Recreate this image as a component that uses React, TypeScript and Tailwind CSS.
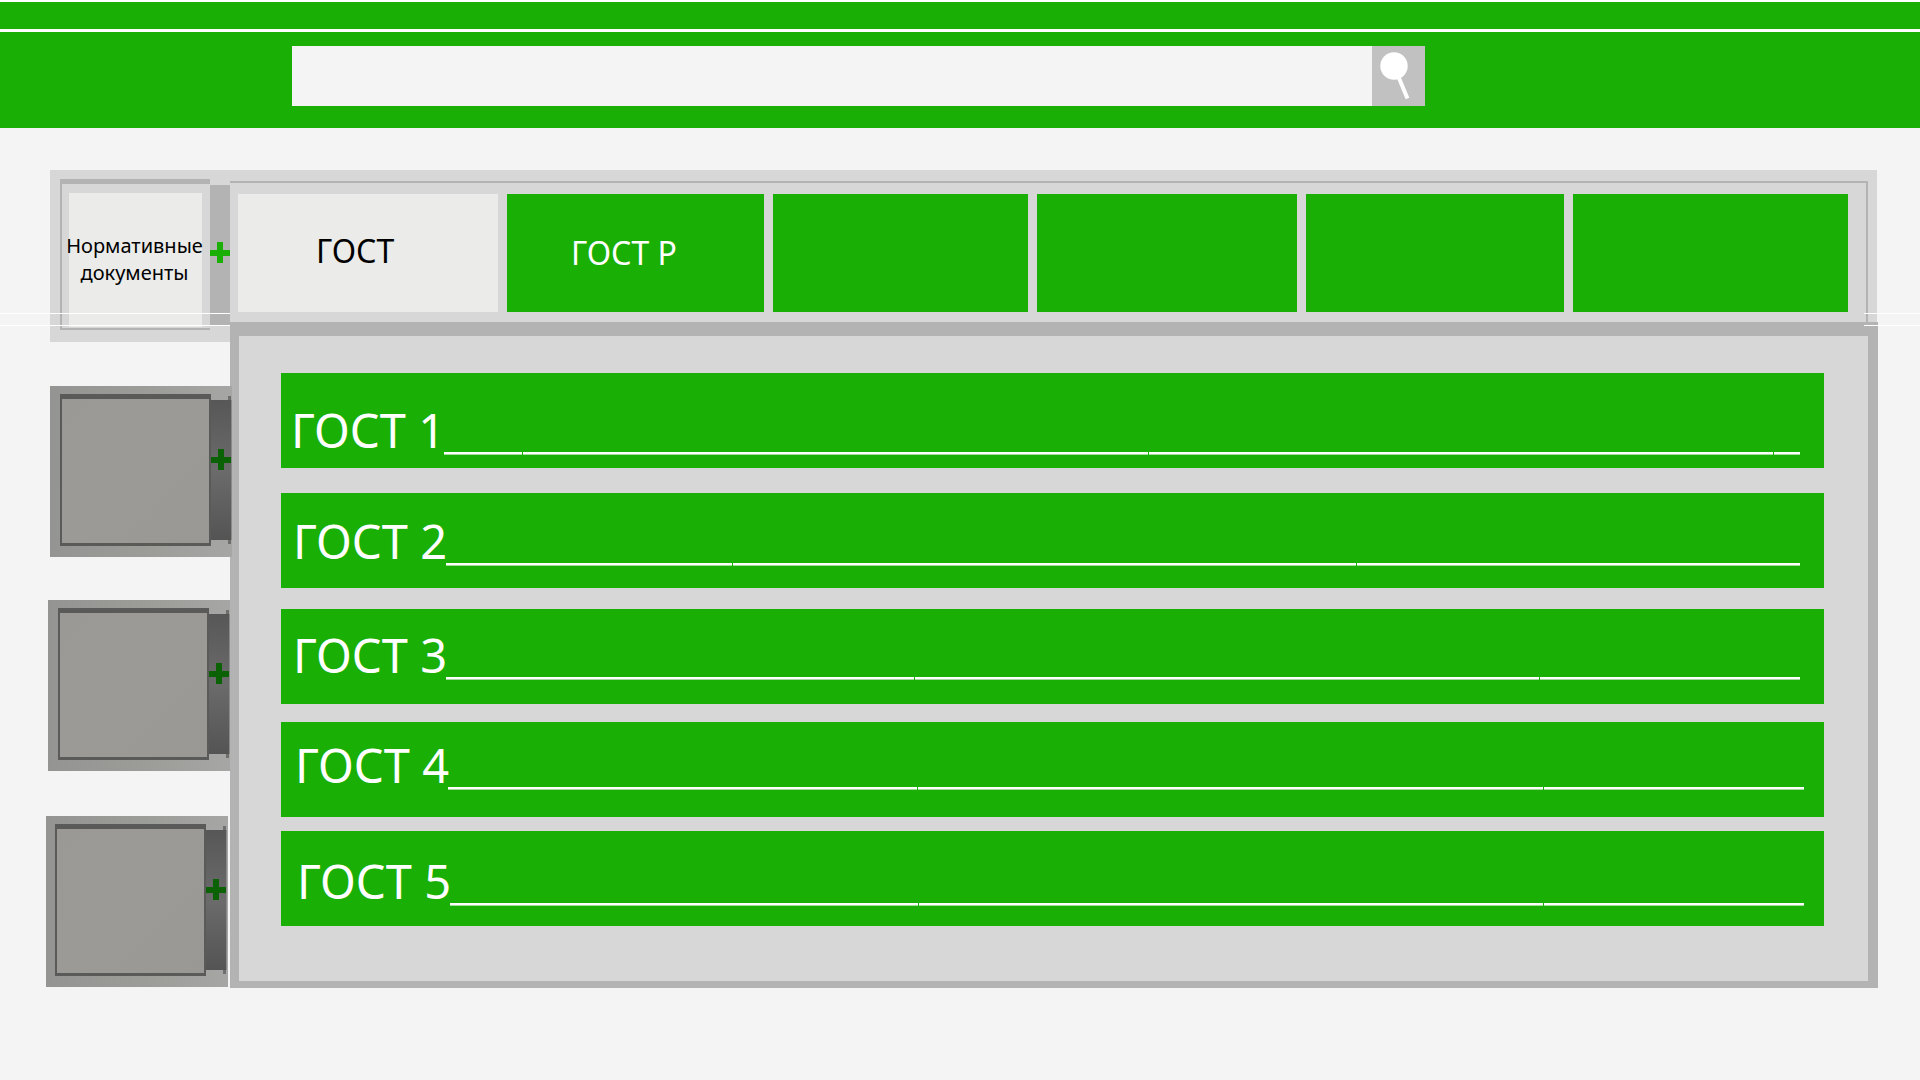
type Row = { label: string; box: string; segments: number[] };

const tabs = ['ГОСТ', 'ГОСТ Р', '', '', '', ''];

const rows: Row[] = [
  { label: 'ГОСТ 1', box: 'pt-[35px] pl-2.5 pr-6', segments: [78, 624, 624, 26] },
  { label: 'ГОСТ 2', box: 'mt-[25px] pt-[26px] pl-3 pr-6', segments: [286, 624, 443] },
  { label: 'ГОСТ 3', box: 'mt-[21px] pt-6 pl-3 pr-6', segments: [468, 624, 260] },
  { label: 'ГОСТ 4', box: 'mt-[18px] pt-[21px] pl-3.5 pr-5', segments: [468, 624, 260] },
  { label: 'ГОСТ 5', box: 'mt-3.5 pt-7 pl-4 pr-5', segments: [468, 624, 260] },
];

function Plus({ color }: { color: string }) {
  return (
    <svg viewBox="0 0 20 21" className={`h-[21px] w-5 ${color}`} fill="currentColor" aria-hidden="true">
      <path d="M7 0h6v8h7v6h-7v7H7v-7H0V8h7z" />
    </svg>
  );
}

function DimTile({ className }: { className: string }) {
  return (
    <button
      type="button"
      aria-label="Раздел"
      className={`relative z-10 flex h-[171px] w-[182px] shrink-0 items-start bg-linear-to-r from-[#949492] via-[#9b9b98] to-[#a6a6a4] pt-2 ${className}`}
    >
      <span className="h-[152px] w-[151px] shrink-0 border-2 border-t-[5px] border-b-[3px] border-[#5a5a59] bg-linear-to-br from-[#9a9996] via-[#9b9a97] to-[#999895]" />
      <span className="relative mt-1.5 flex h-[140px] w-[21px] shrink-0 items-center justify-center border-r border-[#8a8a8a] bg-linear-to-b from-[#575757] via-[#6b6b6b] to-[#545454] pb-[22px]">
        <Plus color="text-[#0b6204]" />
        <span className="absolute -top-1 right-0 h-1 w-[3px] bg-[#6e6e6e]" />
        <span className="absolute right-0 -bottom-1 h-1 w-[3px] bg-[#6e6e6e]" />
      </span>
    </button>
  );
}

function Header() {
  return (
    <header className="border-t-2 border-white bg-white">
      <div className="h-[27px] bg-[#1aaf05]" />
      <div className="mt-[3px] h-24 bg-[#1aaf05] pt-3.5">
        <form className="ml-[292px] flex h-[60px] w-[59%]" onSubmit={(e) => e.preventDefault()}>
          <input type="search" aria-label="Поиск" className="min-w-0 flex-1 bg-[#f4f4f4] px-4 text-2xl outline-none" />
          <button type="submit" aria-label="Найти" className="h-full w-[53px] bg-[#c1c1c1]">
            <svg viewBox="0 0 53 60" className="h-full w-full" aria-hidden="true">
              <circle cx="22" cy="20" r="13.7" fill="#fff" />
              <path d="M26.5 31 35.5 52.5" stroke="#fff" strokeWidth="4" />
            </svg>
          </button>
        </form>
      </div>
    </header>
  );
}

export default function App() {
  return (
    <div className="min-h-screen bg-[#f4f4f4] font-['Noto_Sans',sans-serif] text-black">
      <Header />
      <main className="relative mt-[42px] flex pr-[42px] pl-[46px]">
        <nav aria-label="Разделы" className="flex w-[184px] shrink-0 flex-col">
          <button type="button" className="ml-1 flex h-[172px] items-start bg-[#d7d7d7] pt-[9px] pl-2.5">
            <span className="flex h-[151px] w-[150px] shrink-0 border-2 border-t-[5px] border-r-0 border-[#b3b3b3] bg-[#d7d7d7] pt-[9px] pr-2 pb-px pl-[7px]">
              <span className="flex min-w-0 flex-1 items-center justify-center bg-[#ebebe9] pr-0.5 pb-0.5 text-xl leading-[27px] whitespace-nowrap">
                Нормативные
                <br />
                документы
              </span>
            </span>
            <span className="mt-1.5 flex h-[141px] w-5 shrink-0 items-center justify-center bg-[#b3b3b3] pb-1.5">
              <Plus color="text-[#1aaf05]" />
            </span>
          </button>
          <DimTile className="mt-11 ml-1 pl-2.5" />
          <DimTile className="mt-[43px] ml-0.5 pl-2.5" />
          <DimTile className="mt-[45px] pl-[9px]" />
        </nav>
        <div className="min-w-0 flex-1">
          <div className="mr-px bg-[#d7d7d7] pt-[11px] pr-[9px]">
            <div className="grid h-[141px] grid-cols-[260fr_257fr_255fr_260fr_258fr_275fr] gap-[9px] border-t-2 border-r-2 border-[#b3b3b3] pt-[11px] pr-[18px] pb-2.5 pl-2">
              {tabs.map((tab, i) => (
                <button
                  key={i}
                  type="button"
                  aria-label={tab || `Вкладка ${i + 1}`}
                  className={
                    i === 0
                      ? 'bg-[#ebebe9] pb-1 pl-[78px] text-left text-[32px] leading-none text-black'
                      : 'bg-[#1aaf05] pl-16 text-left text-[32px] leading-none text-white'
                  }
                >
                  {tab}
                </button>
              ))}
            </div>
          </div>
          <section className="border-t-[14px] border-r-[10px] border-b-[7px] border-l-[9px] border-[#b3b3b3] bg-[#d7d7d7] pt-[37px] pr-11 pb-[55px] pl-[42px]">
            {rows.map((row) => (
              <button
                key={row.label}
                type="button"
                className={`flex h-[95px] w-full items-start bg-[#1aaf05] text-left text-white ${row.box}`}
              >
                <span className="w-[153px] shrink-0 text-[47px] leading-[44px] whitespace-nowrap">{row.label}</span>
                <span className="mt-11 flex flex-1 gap-px">
                  {row.segments.map((size, i) => (
                    <span key={i} className="h-[3px] border-b border-[#a3dd9b] bg-white" style={{ flex: size }} />
                  ))}
                </span>
              </button>
            ))}
          </section>
        </div>
        <div className="absolute top-[143px] left-0 h-[13px] w-[230px] border-y border-white" />
        <div className="absolute top-[143px] right-0 h-[13px] w-14 border-y border-white" />
      </main>
    </div>
  );
}
